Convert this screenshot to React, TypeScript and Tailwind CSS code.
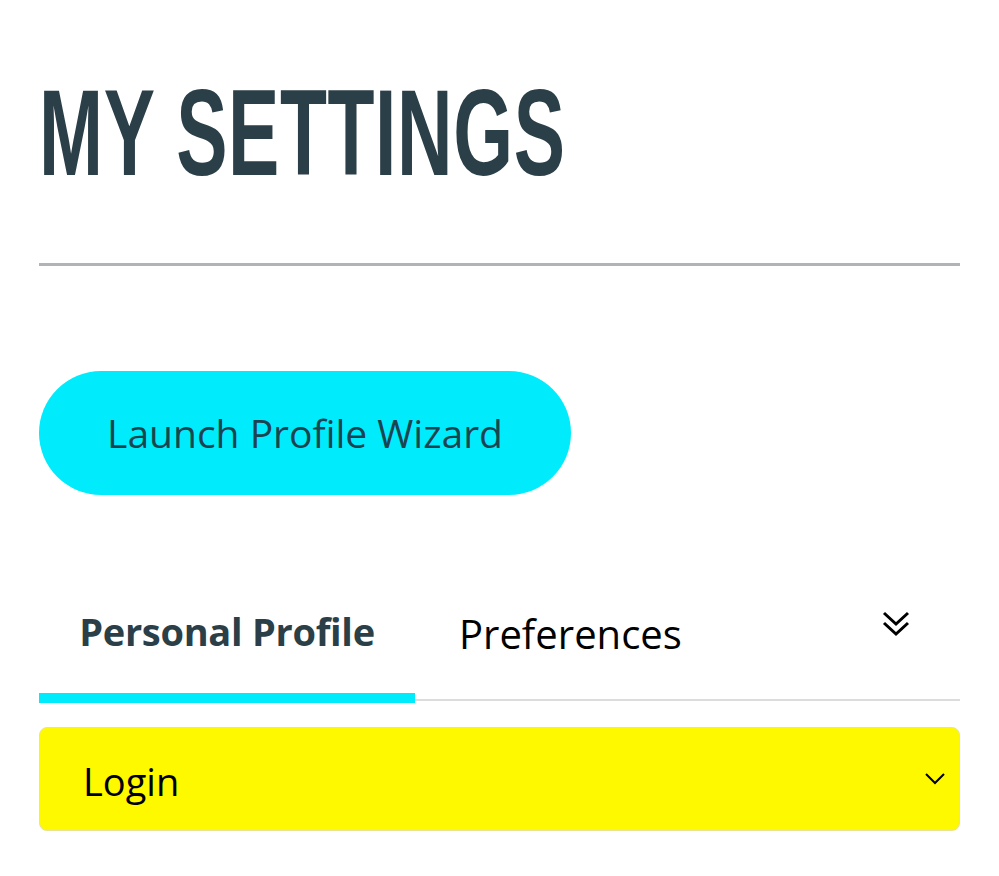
import React from "react";

export default function App() {
  return (
    <div className="min-h-[876px] w-full bg-white px-[39px]" style={{ fontFamily: "'Open Sans', 'Liberation Sans', sans-serif" }}>
      <div className="pt-[71px] h-[180px] overflow-visible">
        <h1
          className="inline-block origin-left scale-x-[0.625] whitespace-nowrap text-[123px] font-bold leading-none tracking-[1px] text-[#2b3f48]"
          style={{ fontFamily: "'Liberation Sans', Arial, sans-serif" }}
        >
          MY SETTINGS
        </h1>
      </div>
      <div className="mt-[83px] h-[3px] w-full bg-[#b0b4b6]" />
      <div className="mt-[105px]">
        <button className="flex h-[124px] w-[532px] items-center justify-center rounded-full bg-[#00ecfc] text-[39px] font-medium text-[#1a4450]">
          Launch Profile Wizard
        </button>
      </div>
      <div className="mt-[102px]">
        <div className="flex h-[96px] items-start">
          <div className="flex w-[376px] justify-center pt-[10px] text-[38px] font-bold leading-[48px] tracking-[-0.3px] text-[#2b3f48]">
            Personal Profile
          </div>
          <div className="ml-[44px] pt-[13px] text-[40px] leading-[48px] text-black">Preferences</div>
          <div className="ml-auto mr-[50px] pt-[14px]">
            <svg width="28" height="26" viewBox="0 0 28 26" fill="none" stroke="black" strokeWidth="3">
              <path d="M2 2 L14 13 L26 2" />
              <path d="M2 12 L14 23 L26 12" />
            </svg>
          </div>
        </div>
        <div className="relative h-[10px]">
          <div className="absolute left-0 top-0 h-[10px] w-[376px] bg-[#00ecfc]" />
          <div className="absolute left-[376px] right-0 top-[6px] h-[2px] bg-[#dcdcdc]" />
        </div>
        <div className="mt-[24px] flex h-[104px] items-center justify-between rounded-[8px] border border-[#e8e2a0] bg-[#fff900] pl-[43px] pr-[14px]">
          <span className="pt-[4px] text-[38px] text-black">Login</span>
          <svg width="20" height="12" viewBox="0 0 20 12" fill="none" stroke="black" strokeWidth="2">
            <path d="M1 1 L10 10 L19 1" />
          </svg>
        </div>
      </div>
    </div>
  );
}
